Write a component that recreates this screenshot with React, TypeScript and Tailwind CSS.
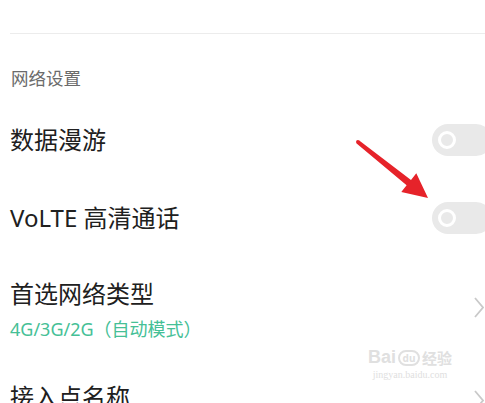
import React from "react";

const font = { fontFamily: '"Noto Sans", "Noto Sans CJK SC", sans-serif' };

function Toggle() {
  return (
    <div className="flex items-center shrink-0 w-[60px] h-[32px] -mr-[7px] rounded-full bg-[#e9e9e9]">
      <div className="ml-[6px] w-[18px] h-[18px] rounded-full border-[3px] border-white" />
    </div>
  );
}

function Chevron({ className = "" }: { className?: string }) {
  return (
    <svg width="10" height="21" viewBox="0 0 10 21" className={`shrink-0 mr-[1px] ${className}`}>
      <polyline points="1,1 9,10.5 1,20" fill="none" stroke="#c9c9c9" strokeWidth="1.8" />
    </svg>
  );
}

export default function App() {
  return (
    <div className="relative w-[485px] h-[403px] overflow-hidden bg-white text-[#202020]" style={font}>
      {/* top divider */}
      <div className="h-[33px]" />
      <div className="ml-[10px] h-[1px] bg-[#ececec]" />

      {/* section header */}
      <div className="h-[68px] pt-[32px] pl-[11px] text-[17.5px] leading-[24px] text-[#6b6b6b]">
        网络设置
      </div>

      {/* 数据漫游 */}
      <div className="flex items-center justify-between h-[76px] pl-[10px]">
        <span className="text-[24px] leading-[32px]">数据漫游</span>
        <Toggle />
      </div>

      {/* VoLTE */}
      <div className="flex items-center justify-between h-[80px] pl-[10px]">
        <span className="text-[24px] leading-[32px]">VoLTE 高清通话</span>
        <Toggle />
      </div>

      {/* 首选网络类型 */}
      <div className="flex justify-between h-[98px] pl-[10px]">
        <div className="pt-[20px] flex flex-col gap-[7px]">
          <span className="text-[24px] leading-[32px]">首选网络类型</span>
          <span className="text-[18px] leading-[24px] text-[#45c096]">4G/3G/2G（自动模式）</span>
        </div>
        <Chevron className="self-center" />
      </div>

      {/* 接入点名称 */}
      <div className="flex justify-between items-start pl-[10px]">
        <span className="pt-[25px] text-[24px] leading-[32px]">接入点名称</span>
        <Chevron className="mt-[34px]" />
      </div>

      {/* red arrow annotation */}
      <svg className="absolute left-0 top-0 pointer-events-none" width="485" height="403">
        <polygon
          points="358.9,140.2 411,179.9 416.3,173.2 428,198 401.3,192 406.6,185.3 356.6,143.6"
          fill="#e6232a"
        />
        <circle cx="357.8" cy="141.9" r="1.8" fill="#e6232a" />
      </svg>

      {/* watermark */}
      <div className="absolute left-[368px] top-[348px] flex flex-col items-center text-[#e0e0e0] pointer-events-none">
        <div className="flex items-end gap-[2px] leading-none">
          <span className="text-[18px] font-bold" style={{ fontFamily: '"Liberation Sans", sans-serif' }}>Bai</span>
          <span className="flex items-center justify-center w-[22px] h-[16px] rounded-full border-2 border-[#e0e0e0] text-[10px] font-bold">
            du
          </span>
          <span className="text-[15px] font-bold">经验</span>
        </div>
        <span className="mt-[4px] text-[10px] leading-none" style={{ fontFamily: '"Liberation Serif", serif' }}>
          jingyan.baidu.com
        </span>
      </div>
    </div>
  );
}
